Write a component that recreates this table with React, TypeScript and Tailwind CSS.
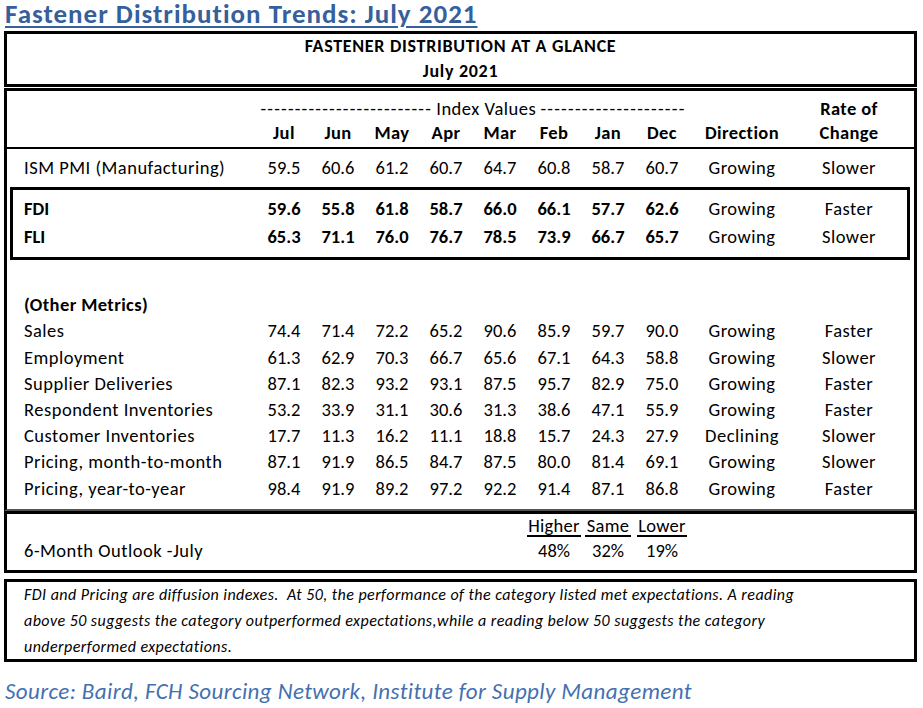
import React from "react";

const months = ["Jul", "Jun", "May", "Apr", "Mar", "Feb", "Jan", "Dec"];

type Row = { label: string; vals: string[]; dir: string; rate: string };

const other: Row[] = [
  { label: "Sales", vals: ["74.4", "71.4", "72.2", "65.2", "90.6", "85.9", "59.7", "90.0"], dir: "Growing", rate: "Faster" },
  { label: "Employment", vals: ["61.3", "62.9", "70.3", "66.7", "65.6", "67.1", "64.3", "58.8"], dir: "Growing", rate: "Slower" },
  { label: "Supplier Deliveries", vals: ["87.1", "82.3", "93.2", "93.1", "87.5", "95.7", "82.9", "75.0"], dir: "Growing", rate: "Faster" },
  { label: "Respondent Inventories", vals: ["53.2", "33.9", "31.1", "30.6", "31.3", "38.6", "47.1", "55.9"], dir: "Growing", rate: "Faster" },
  { label: "Customer Inventories", vals: ["17.7", "11.3", "16.2", "11.1", "18.8", "15.7", "24.3", "27.9"], dir: "Declining", rate: "Slower" },
  { label: "Pricing, month-to-month", vals: ["87.1", "91.9", "86.5", "84.7", "87.5", "80.0", "81.4", "69.1"], dir: "Growing", rate: "Slower" },
  { label: "Pricing, year-to-year", vals: ["98.4", "91.9", "89.2", "97.2", "92.2", "91.4", "87.1", "86.8"], dir: "Growing", rate: "Faster" },
];

const fdi: Row[] = [
  { label: "FDI", vals: ["59.6", "55.8", "61.8", "58.7", "66.0", "66.1", "57.7", "62.6"], dir: "Growing", rate: "Faster" },
  { label: "FLI", vals: ["65.3", "71.1", "76.0", "76.7", "78.5", "73.9", "66.7", "65.7"], dir: "Growing", rate: "Slower" },
];

const GRID = "grid grid-cols-[250px_repeat(8,54px)_106px_108px]";
const GRID_FDI = "grid grid-cols-[244px_repeat(8,54px)_106px_108px]";

function DataRow({ r, bold }: { r: Row; bold?: boolean }) {
  return (
    <>
      <div className={bold ? "pl-[11px] font-bold" : "pl-[17px] tracking-[0.5px]"}>{r.label}</div>
      {r.vals.map((v, i) => (
        <div key={i} className={"text-center " + (bold ? "font-bold" : "")}>
          {v}
        </div>
      ))}
      <div className="text-center tracking-[0.5px]">{r.dir}</div>
      <div className="text-center tracking-[0.5px]">{r.rate}</div>
    </>
  );
}

export default function App() {
  return (
    <div className="w-[923px] h-[708px] overflow-hidden bg-white pl-[4px] text-black font-[family-name:Carlito,Calibri,Lato,sans-serif]">
      <div className="w-[913px]">
        <h1 className="pl-[1px] text-[27px] leading-[28px] tracking-[1px] font-bold text-[#365f9c] underline decoration-2 underline-offset-[3px]">
          Fastener Distribution Trends: July 2021
        </h1>

        <div className="mt-[3px] border-[3px] border-black text-center text-[18px] font-bold leading-[25px] tracking-[0.7px]">
          <div>FASTENER DISTRIBUTION AT A GLANCE</div>
          <div>July 2021</div>
        </div>

        <div className="mt-[1px] border-[3px] border-black border-b-2 border-b-[#555] pt-[6px] pb-[7px] text-[18.5px]">
          <div className={GRID + " h-[24px] leading-[24px]"}>
            <div />
            <div className="col-span-8 text-center whitespace-nowrap">
              <span className="tracking-[1.2px]">-------------------------</span>{" "}
              <span className="tracking-[0.5px]">Index Values</span>{" "}
              <span className="tracking-[1.25px]">---------------------</span>
            </div>
            <div />
            <div className="text-center font-bold tracking-[0.4px]">Rate of</div>
          </div>
          <div className={GRID + " h-[24px] leading-[24px] font-bold tracking-[0.4px]"}>
            <div />
            {months.map((m) => (
              <div key={m} className="text-center">
                {m}
              </div>
            ))}
            <div className="text-center">Direction</div>
            <div className="text-center">Change</div>
          </div>
          <div className="mt-[2px] h-[2px] bg-black" />
          <div className={GRID + " mt-[6px] h-[26.2px] leading-[26.2px]"}>
            <DataRow
              r={{ label: "ISM PMI (Manufacturing)", vals: ["59.5", "60.6", "61.2", "60.7", "64.7", "60.8", "58.7", "60.7"], dir: "Growing", rate: "Slower" }}
            />
          </div>

          <div className="mt-[6px] ml-[3px] mr-[4px] border-[3px] border-black pt-[5px] pb-[6px]">
            {fdi.map((r) => (
              <div key={r.label} className={GRID_FDI + " h-[28px] leading-[28px]"}>
                <DataRow r={r} bold />
              </div>
            ))}
          </div>

          <div className={GRID + " mt-[32px] h-[26.2px] leading-[26.2px]"}>
            <div className="pl-[17px] font-bold col-span-11 tracking-[0.4px]">(Other Metrics)</div>
          </div>
          {other.map((r) => (
            <div key={r.label} className={GRID + " h-[26.2px] leading-[26.2px]"}>
              <DataRow r={r} />
            </div>
          ))}
        </div>

        <div className="border-[3px] border-black pt-[2px] pb-[6.5px] text-[18.5px]">
          <div className={GRID + " leading-[19px] tracking-[0.3px]"}>
            <div className="col-span-6" />
            <div className="border-b-2 border-black text-center">Higher</div>
            <div className="mx-[4px] border-b-2 border-black text-center">Same</div>
            <div className="mx-[2px] border-b-2 border-black text-center">Lower</div>
          </div>
          <div className={GRID + " mt-[1px] h-[26.2px] leading-[26.2px]"}>
            <div className="pl-[17px] tracking-[0.5px]">6-Month Outlook -July</div>
            <div className="col-span-5" />
            <div className="text-center">48%</div>
            <div className="text-center">32%</div>
            <div className="text-center">19%</div>
          </div>
        </div>

        <div className="mt-[6px] border-[3px] border-black pl-[17px] text-[16px] italic leading-[25.6px] tracking-[0.45px]">
          <div className="whitespace-pre">
            FDI and Pricing are diffusion indexes.  At 50, the performance of the category listed met expectations. A reading
          </div>
          <div>above 50 suggests the category outperformed expectations,while a reading below 50 suggests the category</div>
          <div>underperformed expectations.</div>
        </div>

        <div className="mt-[14px] pl-[1px] text-[23px] italic leading-[30px] tracking-[0.4px] text-[#4370b0]">
          Source: Baird, FCH Sourcing Network, Institute for Supply Management
        </div>
      </div>
    </div>
  );
}
